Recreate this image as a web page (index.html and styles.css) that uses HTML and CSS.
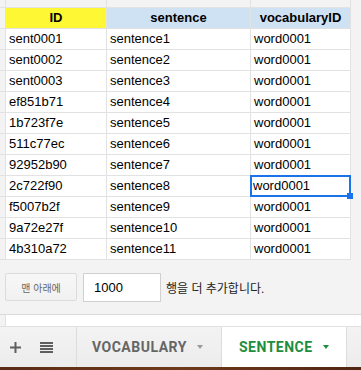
FILE: index.html
```html
<!DOCTYPE html>
<html lang="ko">
  <head>
    <meta charset="UTF-8" />
    <meta name="viewport" content="width=device-width, initial-scale=1.0" />
    <title>SENTENCE</title>
    <link rel="stylesheet" href="styles.css">
  </head>
  <body>
    <!-- 시트 그리드 -->
    <div class="sheet">
      <div class="corner"></div>
      <div class="colHead"></div>
      <div class="colHead"></div>
      <div class="colHead"></div>

      <div class="rowHead"></div>
      <div class="cell head yellow">ID</div>
      <div class="cell head blue">sentence</div>
      <div class="cell head blue">vocabularyID</div>

      <div class="rowHead"></div><div class="cell">sent0001</div><div class="cell">sentence1</div><div class="cell">word0001</div>
      <div class="rowHead"></div><div class="cell">sent0002</div><div class="cell">sentence2</div><div class="cell">word0001</div>
      <div class="rowHead"></div><div class="cell">sent0003</div><div class="cell">sentence3</div><div class="cell">word0001</div>
      <div class="rowHead"></div><div class="cell">ef851b71</div><div class="cell">sentence4</div><div class="cell">word0001</div>
      <div class="rowHead"></div><div class="cell">1b723f7e</div><div class="cell">sentence5</div><div class="cell">word0001</div>
      <div class="rowHead"></div><div class="cell">511c77ec</div><div class="cell">sentence6</div><div class="cell">word0001</div>
      <div class="rowHead"></div><div class="cell">92952b90</div><div class="cell">sentence7</div><div class="cell">word0001</div>
      <div class="rowHead"></div><div class="cell">2c722f90</div><div class="cell">sentence8</div><div class="cell selected">word0001</div>
      <div class="rowHead"></div><div class="cell">f5007b2f</div><div class="cell">sentence9</div><div class="cell">word0001</div>
      <div class="rowHead"></div><div class="cell">9a72e27f</div><div class="cell">sentence10</div><div class="cell">word0001</div>
      <div class="rowHead"></div><div class="cell">4b310a72</div><div class="cell">sentence11</div><div class="cell">word0001</div>
    </div>

    <!-- 행 추가 -->
    <div class="addRows">
      <button class="addButton">맨 아래에</button>
      <input type="text" class="addInput" value="1000" />
      <span class="addText">행을 더 추가합니다.</span>
    </div>

    <div class="strip">
      <div class="stripHead"></div>
    </div>

    <!-- 시트 탭 -->
    <div class="tabBar">
      <div class="tools">
        <svg width="11" height="11" viewBox="0 0 11 11">
          <rect x="4.5" y="0" width="2" height="11" fill="#5f5f5f" />
          <rect x="0" y="4.5" width="11" height="2" fill="#5f5f5f" />
        </svg>
        <svg width="13" height="11" viewBox="0 0 13 11">
          <rect x="0" y="0" width="13" height="2" fill="#5f5f5f" />
          <rect x="0" y="3" width="13" height="2" fill="#5f5f5f" />
          <rect x="0" y="6" width="13" height="2" fill="#5f5f5f" />
          <rect x="0" y="9" width="13" height="2" fill="#5f5f5f" />
        </svg>
      </div>
      <div class="tab">
        <span>VOCABULARY</span>
        <span class="caret"></span>
      </div>
      <div class="tab active">
        <span>SENTENCE</span>
        <span class="caret"></span>
      </div>
      <div class="tabRest"></div>
    </div>
    <div class="desk"></div>
  </body>
</html>
```

FILE: styles.css
```css
body {
  margin: 0;
  background-color: #f3f3f3;
  font-family: "Liberation Sans", Arial, sans-serif;
  font-size: 13px;
  color: #000;
  width: 361px;
  height: 370px;
  overflow: hidden;
}

/* 시트 그리드 */
.sheet {
  display: grid;
  grid-template-columns: 5px 100px 143px 99px;
  grid-template-rows: 7px repeat(12, 20px);
  gap: 1px;
  width: 350px;
  padding: 0 1px 1px 0;
  background-color: #e2e2e2; /* 격자선 */
}
.corner,
.colHead,
.rowHead {
  background-color: #f3f3f3;
}
.cell {
  background-color: #fff;
  line-height: 20px;
  padding: 0 3px;
  white-space: nowrap;
  overflow: hidden;
}
.head {
  font-weight: bold;
  text-align: center;
}
.yellow {
  background-color: #fdf734;
}
.blue {
  background-color: #cfe2f3;
}
.selected {
  position: relative;
  overflow: visible;
  outline: 2px solid #1a73e8;
  outline-offset: -1px;
  padding-left: 2px;
}
.selected::after {
  content: "";
  position: absolute;
  right: -3px;
  bottom: -3px;
  width: 6px;
  height: 6px;
  background-color: #1a73e8;
}

/* 행 추가 */
.addRows {
  display: flex;
  align-items: center;
  height: 54px;
  padding-left: 5px;
  border-bottom: 1px solid #dadada;
}
.addButton {
  width: 72px;
  height: 28px;
  margin: 0 6px 0 0;
  padding: 0;
  background: linear-gradient(#f7f7f7, #f1f1f1);
  border: 1px solid #dcdcdc;
  border-radius: 2px;
  color: #666;
  font-family: "Noto Sans CJK KR", sans-serif;
  font-size: 10px;
}
.addInput {
  box-sizing: border-box;
  width: 78px;
  height: 29px;
  margin: 0 5px 0 0;
  padding: 0 0 0 10px;
  border: 1px solid #d0d0d0;
  background-color: #fff;
  font-family: "Liberation Sans", Arial, sans-serif;
  font-size: 13px;
  color: #000;
}
.addText {
  font-family: "Liberation Sans", "Noto Sans CJK KR", sans-serif;
  font-size: 12px;
  color: #222;
}

.strip {
  height: 11px;
  background-color: #fff;
}
.stripHead {
  width: 5px;
  height: 11px;
  background-color: #f3f3f3;
  border-right: 1px solid #e2e2e2;
}

/* 시트 탭 */
.tabBar {
  display: flex;
  height: 40px;
  background: linear-gradient(#f3f3f3, #ececec);
  border-top: 1px solid #e0e0e0;
  font-family: Roboto, "Liberation Sans", sans-serif;
  font-size: 14px;
  font-weight: bold;
  letter-spacing: 0.5px;
}
.tools {
  display: flex;
  align-items: center;
  gap: 19px;
  width: 66px;
  padding-left: 10px;
  border-right: 1px solid #dcdcdc;
}
.tab {
  display: flex;
  align-items: center;
  gap: 10px;
  width: 129px;
  padding-left: 15px;
  border-right: 1px solid #dcdcdc;
  color: #666;
}
.tab .caret {
  width: 0;
  height: 0;
  border-left: 3.5px solid transparent;
  border-right: 3.5px solid transparent;
  border-top: 4px solid #999;
}
.tab.active {
  width: 107px;
  padding-left: 17px;
  background-color: #fff;
  color: #1e8e3e;
}
.tab.active .caret {
  border-top-color: #1e8e3e;
}
.tabRest {
  flex: 1;
}

.desk {
  height: 3px;
  background: linear-gradient(90deg, #5a2c16, #6e3a1c, #4e2612);
}
```
